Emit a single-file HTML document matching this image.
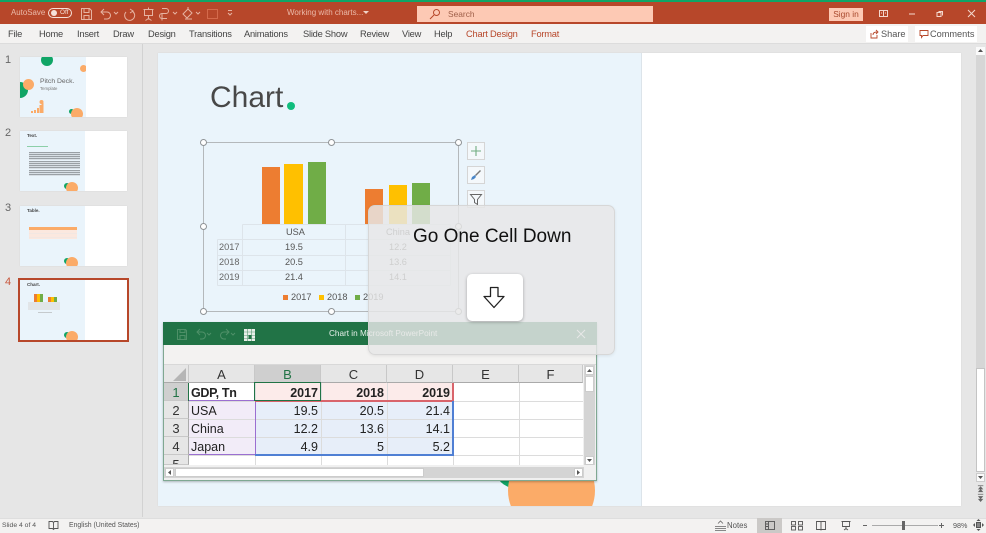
<!DOCTYPE html>
<html style="background:#e6e6e6"><head><meta charset="utf-8"><style>
html,body{margin:0;padding:0}
body{width:986px;height:533px;overflow:hidden;position:relative;background:#e6e6e6;font-family:"Liberation Sans",sans-serif;color:#444;filter:blur(.35px)}
div,span,svg{position:absolute;box-sizing:border-box}
.t{white-space:nowrap;line-height:1}
.tab{top:29px;font-size:9.300px;letter-spacing:-.22px;color:#444;white-space:nowrap;line-height:1.2}
.cell{font-size:12.500px;line-height:20px;height:18px;white-space:nowrap;color:#222;font-family:"Liberation Sans",sans-serif}
.r{text-align:right}
.hd{background:#e6e6e6;border-right:1px solid #c8c8c8;border-bottom:1px solid #aaa;text-align:center;font-size:13px;line-height:19px;color:#333}
.rh{background:#e6e6e6;border-bottom:1px solid #c8c8c8;border-right:1px solid #aaa;text-align:center;font-size:13px;line-height:20px;color:#333;left:164px;width:25px}
.h{width:7px;height:7px;border-radius:50%;background:#fff;border:1px solid #8f9396}
.thumb{left:20px;width:107px;background:#fff;overflow:hidden;box-shadow:0 0 1px #ccc}
.num{left:5px;font-size:11px;line-height:13px;color:#666}
.dot{border-radius:50%}
</style></head><body>

<!-- title bar -->
<div style="left:0;top:0;width:986px;height:2px;background:#10a566"></div>
<div style="left:0;top:2px;width:986px;height:22px;background:#b7472a"></div>
<div class="t" style="left:11px;top:9px;font-size:7.900px;color:#eab9a9">AutoSave</div>
<div style="left:48px;top:8px;width:24px;height:10px;border:1px solid #f6e0d8;border-radius:6px"></div>
<div class="dot" style="left:51px;top:10px;width:6px;height:6px;background:#f6e0d8"></div>
<div class="t" style="left:60px;top:10px;font-size:6.400px;color:#f6e0d8">Off</div>
<svg style="left:0;top:0" width="300" height="24" fill="none" stroke="#e6b3a2" stroke-width="1">
<path d="M81.500 8.500h8l2 2v9h-10zM84 8.500v4h5v-4M84 19.500v-4h5v4"/>
<path d="M104 9l-3 3 3 3M101 12h6a3 3 0 0 1 0 7h-3"/>
<path d="M114 12l2 2 2-2" />
<path d="M130 9l3 2-3 2M132 11a5 5 0 1 1-6 1"/>
<path d="M143.500 9.500h10M144.500 9.500v6h8v-6M148.500 15.500v4M145.500 20.500l3-2 3 2M148.500 7.500v2"/>
<path d="M162 8.500h4a2 2 0 0 1 0 5h-4a2.500 2.500 0 0 0 0 5h5M162 13.500v7"/>
<path d="M173 12l2 2 2-2"/>
<path d="M183 14l5-5 4 4-5 5zM185 19h7M188 9v-2"/>
<path d="M196 12l2 2 2-2"/>
<rect x="207.500" y="9.500" width="10" height="9" stroke="#d46a4c"/>
<path d="M228 10.500h4M228 13l2 2 2-2"/>
</svg>
<div class="t" style="left:287px;top:9px;font-size:8px;color:#eab9a9">Working with charts...</div>
<svg style="left:363px;top:11px" width="6" height="4"><path d="M0 0h6L3 3z" fill="#f0d3c8"/></svg>
<div style="left:417px;top:6px;width:236px;height:16px;background:#fdc9b4"></div>
<svg style="left:429px;top:8px" width="12" height="12" fill="none" stroke="#b7472a" stroke-width="1"><circle cx="7.500" cy="4.500" r="3"/><path d="M5 7l-4 4"/></svg>
<div class="t" style="left:448px;top:10px;font-size:8.400px;color:#a0604a">Search</div>
<div class="t" style="left:829px;top:8px;width:34px;height:13px;background:#fdc9b4;color:#a8482c;font-size:8.400px;line-height:13px;text-align:center">Sign in</div>
<svg style="left:876px;top:6px" width="104" height="16" fill="none" stroke="#f4d8ce" stroke-width="1"><rect x="3.500" y="4.500" width="8" height="6"/><path d="M7.500 5v5M5 7h1M9 7h1"/><path d="M33 8h6"/><path d="M62.500 5.500h4v4M61 6.500h4v4h-4z"/><path d="M92 4l7 7M99 4l-7 7"/></svg>

<!-- ribbon -->
<div style="left:0;top:24px;width:986px;height:20px;background:#f3f2f1;border-bottom:1px solid #dcdcdc"></div>
<div class="tab" style="left:8px">File</div>
<div class="tab" style="left:39px">Home</div>
<div class="tab" style="left:77px">Insert</div>
<div class="tab" style="left:113px">Draw</div>
<div class="tab" style="left:148px">Design</div>
<div class="tab" style="left:189px">Transitions</div>
<div class="tab" style="left:244px">Animations</div>
<div class="tab" style="left:303px">Slide Show</div>
<div class="tab" style="left:360px">Review</div>
<div class="tab" style="left:402px">View</div>
<div class="tab" style="left:434px">Help</div>
<div class="tab" style="left:466px;color:#b7472a">Chart Design</div>
<div class="tab" style="left:531px;color:#b7472a">Format</div>
<div style="left:866px;top:26px;width:42px;height:16px;background:#fff"></div>
<svg style="left:870px;top:29px" width="9" height="10" fill="none" stroke="#b7472a" stroke-width=".9"><path d="M1 4v5h6V6M3 6c0-2 1-3 4-3M6 1l2 2-2 2"/></svg>
<div class="tab" style="left:881px;top:29px;color:#555;letter-spacing:0;font-size:9.200px">Share</div>
<div style="left:915px;top:26px;width:62px;height:16px;background:#fff"></div>
<svg style="left:919px;top:29px" width="10" height="10" fill="none" stroke="#b7472a" stroke-width=".9"><path d="M1 1.500h8v5H4L2.500 8.500v-2H1z"/></svg>
<div class="tab" style="left:930px;top:29px;color:#555;letter-spacing:0;font-size:9.200px">Comments</div>

<!-- thumbnails panel -->
<div style="left:142px;top:44px;width:1px;height:473px;background:#d2d2d2"></div>
<div class="num" style="top:54px">1</div>
<div class="num" style="top:127px">2</div>
<div class="num" style="top:202px">3</div>
<div class="num" style="top:276px;color:#c8573c">4</div>

<div class="thumb" style="top:57px;height:60px">
  <div style="left:0;top:0;width:66px;height:60px;background:#eaf4fb;overflow:hidden">
    <div class="dot" style="left:21px;top:-3px;width:12px;height:12px;background:#10a566"></div>
    <div class="dot" style="left:60px;top:8px;width:7px;height:7px;background:#fbab68"></div>
    <div class="dot" style="left:-8px;top:25px;width:16px;height:16px;background:#10a566"></div>
    <div class="dot" style="left:3px;top:22px;width:11px;height:11px;background:#fbab68"></div>
    <div class="t" style="left:20px;top:22px;font-size:6.800px;color:#666">Pitch Deck.</div>
    <div class="t" style="left:20px;top:30px;font-size:4.300px;color:#777">Template</div>
    <svg style="left:11px;top:43px" width="13" height="14"><path d="M0 13h2v-2H0zM3 13h2V10H3zM6 13h2V8H6zM8.500 13h2V5h-2zM10.500 13h2V3h-2z" fill="#fbab68"/><circle cx="10.500" cy="2" r="2" fill="#fbab68"/></svg>
    <div class="dot" style="left:49px;top:52px;width:5px;height:5px;background:#10a566"></div>
    <div class="dot" style="left:51px;top:51px;width:12px;height:12px;background:#fbab68"></div>
  </div>
</div>
<div class="thumb" style="top:131px;height:60px">
  <div style="left:0;top:0;width:65px;height:60px;background:#eaf4fb"></div>
  <div class="t" style="left:7px;top:3px;font-size:4.500px;font-weight:bold;color:#444">Text.</div>
  <div style="left:7px;top:15px;width:21px;height:1px;background:#8ccfa8"></div>
  <div style="left:9px;top:21px;width:51px;height:8px;background:repeating-linear-gradient(#9aa0a5 0 1px,#d8dfe5 1px 2px)"></div>
  <div style="left:9px;top:30px;width:51px;height:8px;background:repeating-linear-gradient(#9aa0a5 0 1px,#d8dfe5 1px 2px)"></div>
  <div style="left:9px;top:39px;width:51px;height:6px;background:repeating-linear-gradient(#9aa0a5 0 1px,#d8dfe5 1px 2px)"></div>
  <div class="dot" style="left:44px;top:52px;width:6px;height:6px;background:#10a566"></div>
  <div class="dot" style="left:46px;top:51px;width:12px;height:12px;background:#fbab68"></div>
</div>
<div class="thumb" style="top:206px;height:60px">
  <div style="left:0;top:0;width:65px;height:60px;background:#eaf4fb"></div>
  <div class="t" style="left:7px;top:3px;font-size:4.500px;font-weight:bold;color:#444">Table.</div>
  <div style="left:9px;top:21px;width:48px;height:3px;background:#fbab68"></div>
  <div style="left:9px;top:24px;width:48px;height:9px;background:repeating-linear-gradient(#fbe8df 0 3px,#f2e7e2 3px 4px)"></div>
  <div class="dot" style="left:44px;top:52px;width:6px;height:6px;background:#10a566"></div>
  <div class="dot" style="left:46px;top:51px;width:12px;height:12px;background:#fbab68"></div>
</div>
<div style="left:18px;top:278px;width:111px;height:64px;border:2px solid #b7472a;background:#fff;overflow:hidden">
  <div style="left:0;top:0;width:65px;height:60px;background:#eaf4fb"></div>
  <div class="t" style="left:7px;top:3px;font-size:4.500px;font-weight:bold;color:#444">Chart.</div>
  <div style="left:14px;top:14px;width:3px;height:8px;background:#ed7d31"></div>
  <div style="left:17px;top:14px;width:3px;height:8px;background:#ffc000"></div>
  <div style="left:20px;top:14px;width:3px;height:8px;background:#70ad47"></div>
  <div style="left:28px;top:17px;width:3px;height:5px;background:#ed7d31"></div>
  <div style="left:31px;top:17px;width:3px;height:5px;background:#ffc000"></div>
  <div style="left:34px;top:17px;width:3px;height:5px;background:#70ad47"></div>
  <div style="left:8px;top:22px;width:32px;height:8px;background:#e1e5e8"></div>
  <div style="left:18px;top:32px;width:14px;height:1px;background:#c5cacd"></div>
  <div class="dot" style="left:44px;top:52px;width:6px;height:6px;background:#10a566"></div>
  <div class="dot" style="left:46px;top:51px;width:12px;height:12px;background:#fbab68"></div>
</div>

<!-- slide -->
<div style="left:158px;top:53px;width:803px;height:453px;background:#fff;overflow:hidden;box-shadow:0 0 1px #ccc">
  <div style="left:0;top:0;width:484px;height:453px;background:#eaf4fb;border-right:1px solid #dce4ea"></div>
  <div class="dot" style="left:337px;top:395px;width:40px;height:40px;background:#10a566"></div>
  <div class="dot" style="left:350px;top:394px;width:87px;height:87px;background:#fbab68"></div>
</div>
<div class="t" style="left:210px;top:83px;font-size:30px;color:#484848">Chart</div>
<div class="dot" style="left:287px;top:102px;width:8px;height:8px;background:#10bd7d"></div>

<!-- chart -->
<div style="left:203px;top:142px;width:256px;height:170px;border:1px solid #b4b8bb"></div>
<div style="left:262px;top:167px;width:18px;height:57px;background:#ed7d31"></div>
<div style="left:284px;top:164px;width:19px;height:60px;background:#ffc000"></div>
<div style="left:308px;top:162px;width:18px;height:62px;background:#70ad47"></div>
<div style="left:365px;top:189px;width:18px;height:35px;background:#ed7d31"></div>
<div style="left:389px;top:185px;width:18px;height:39px;background:#ffc000"></div>
<div style="left:412px;top:183px;width:18px;height:41px;background:#70ad47"></div>
<svg style="left:210px;top:220px" width="250" height="70" stroke="#dde4ea" fill="none"><path d="M32.500 4.500H240.500M7.500 19.500H240.500M7.500 35.500H240.500M7.500 50.500H240.500M7.500 65.500H240.500M7.500 19.500V65.500M32.500 4.500V65.500M135.500 4.500V65.500M240.500 4.500V65.500"/></svg>
<div class="t" style="left:286px;top:228px;font-size:9.200px;color:#555">USA</div>
<div class="t" style="left:386px;top:228px;font-size:9.200px;color:#555">China</div>
<div class="t" style="left:219px;top:243px;font-size:9.200px;color:#666">2017</div>
<div class="t" style="left:219px;top:258px;font-size:9.200px;color:#666">2018</div>
<div class="t" style="left:219px;top:273px;font-size:9.200px;color:#666">2019</div>
<div class="t" style="left:285px;top:243px;font-size:9.200px;color:#555">19.5</div>
<div class="t" style="left:285px;top:258px;font-size:9.200px;color:#555">20.5</div>
<div class="t" style="left:285px;top:273px;font-size:9.200px;color:#555">21.4</div>
<div class="t" style="left:389px;top:243px;font-size:9.200px;color:#555">12.2</div>
<div class="t" style="left:389px;top:258px;font-size:9.200px;color:#555">13.6</div>
<div class="t" style="left:389px;top:273px;font-size:9.200px;color:#555">14.1</div>
<div style="left:283px;top:295px;width:5px;height:5px;background:#ed7d31"></div>
<div class="t" style="left:291px;top:293px;font-size:9.200px;color:#555">2017</div>
<div style="left:319px;top:295px;width:5px;height:5px;background:#ffc000"></div>
<div class="t" style="left:327px;top:293px;font-size:9.200px;color:#555">2018</div>
<div style="left:355px;top:295px;width:5px;height:5px;background:#70ad47"></div>
<div class="t" style="left:363px;top:293px;font-size:9.200px;color:#555">2019</div>
<div class="h" style="left:200px;top:139px"></div><div class="h" style="left:328px;top:139px"></div><div class="h" style="left:455px;top:139px"></div>
<div class="h" style="left:200px;top:223px"></div><div class="h" style="left:455px;top:223px"></div>
<div class="h" style="left:200px;top:308px"></div><div class="h" style="left:328px;top:308px"></div><div class="h" style="left:455px;top:308px"></div>
<!-- chart side buttons -->
<div style="left:467px;top:142px;width:18px;height:18px;background:#f4f8fb;border:1px solid #d5d5d5"></div>
<svg style="left:467px;top:142px" width="18" height="18"><path d="M9 4v10M4 9h10" stroke="#70ad80" stroke-width="1.100"/></svg>
<div style="left:467px;top:166px;width:18px;height:18px;background:#f4f8fb;border:1px solid #d5d5d5"></div>
<svg style="left:467px;top:166px" width="18" height="18"><path d="M13 4L8 9l1 1 5-5z" fill="#777"/><path d="M8 9l-3 2-1 3 3-1 2-2z" fill="#4a86c8"/></svg>
<div style="left:467px;top:190px;width:18px;height:18px;background:#f4f8fb;border:1px solid #d5d5d5"></div>
<svg style="left:467px;top:190px" width="18" height="18" fill="none" stroke="#666"><path d="M3.500 4.500h11l-4 5v5l-3-2v-3z"/></svg>

<!-- excel -->
<div style="left:163px;top:322px;width:434px;height:159px;background:#f0f0f0;border:1px solid #7fa892;box-shadow:0 1px 2px rgba(0,0,0,.25)"></div>
<div style="left:163px;top:322px;width:434px;height:23px;background:#217346"></div>
<svg style="left:163px;top:322px" width="100" height="23" fill="none" stroke="#4e9068"><path d="M14.500 7.500h8l1 1v9h-9zM17 7.500v3h5v-3M17 17.500v-4h5v4"/><path d="M37 7l-3 3 3 3M34 10h5a3 3 0 0 1 0 7h-2"/><path d="M44 11l2 2 2-2M68 11l2 2 2-2"/><path d="M63 7l3 3-3 3M66 10h-5a3 3 0 0 0 0 7h2"/></svg>
<div style="left:244px;top:329px;width:11px;height:12px;background:#e8efe9"></div>
<svg style="left:244px;top:329px" width="11" height="12"><path d="M0 3h11M0 6.500h11M0 9.500h11M3.500 0v12M7.500 0v12" stroke="#5a9a74" stroke-width=".6"/><rect x="4.500" y="6" width="3" height="4" fill="#217346"/></svg>
<div class="t" style="left:329px;top:330px;font-size:8.200px;color:#e9f2ec">Chart in Microsoft PowerPoint</div>
<svg style="left:576px;top:329px" width="10" height="10"><path d="M1 1l8 8M9 1l-8 8" stroke="#e4eee8"/></svg>
<div style="left:164px;top:345px;width:432px;height:20px;background:#f3f2f1;border-bottom:1px solid #d8d8d8"></div>

<!-- grid -->
<div style="left:164px;top:365px;width:419px;height:100px;background:#fff"></div>
<div class="hd" style="left:164px;top:365px;width:25px;height:18px"></div>
<svg style="left:164px;top:365px" width="25" height="18"><path d="M22 3v13H9z" fill="#b5b5b5"/></svg>
<div class="hd" style="left:189px;top:365px;width:66px;height:18px">A</div>
<div class="hd" style="left:255px;top:365px;width:66px;height:18px;background:#cfcfcf;color:#217346">B</div>
<div class="hd" style="left:321px;top:365px;width:66px;height:18px">C</div>
<div class="hd" style="left:387px;top:365px;width:66px;height:18px">D</div>
<div class="hd" style="left:453px;top:365px;width:66px;height:18px">E</div>
<div class="hd" style="left:519px;top:365px;width:64px;height:18px">F</div>
<div class="rh" style="top:383px;height:18px;background:#cfcfcf;color:#217346">1</div>
<div class="rh" style="top:401px;height:18px">2</div>
<div class="rh" style="top:419px;height:18px">3</div>
<div class="rh" style="top:437px;height:18px">4</div>
<div class="rh" style="top:455px;height:10px;overflow:hidden">5</div>
<!-- tinted -->
<div style="left:189px;top:401px;width:66px;height:54px;background:#f2ecf8"></div>
<div style="left:255px;top:383px;width:198px;height:18px;background:#fcebea"></div>
<div style="left:255px;top:401px;width:198px;height:54px;background:#e7eef9"></div>
<svg style="left:164px;top:365px" width="420" height="100" fill="none" stroke="#dcdcdc"><path d="M25 36.500H419M25 54.500H419M25 72.500H419M25 90.500H419M91.500 18V100M157.500 18V100M223.500 18V100M289.500 18V100M355.500 18V100"/></svg>
<div style="left:189px;top:400px;width:67px;height:55px;border-top:1.500px solid #9b6fd1;border-bottom:1.500px solid #9b6fd1;border-right:1.500px solid #9b6fd1"></div>
<div style="left:255px;top:400px;width:198px;height:1.500px;background:#d9646b"></div>
<div style="left:452px;top:383px;width:1.500px;height:18px;background:#d9646b"></div>
<div style="left:255px;top:454px;width:199px;height:1.500px;background:#4f7fd4"></div>
<div style="left:452px;top:401px;width:1.500px;height:55px;background:#4f7fd4"></div>
<div style="left:188px;top:383px;width:1px;height:18px;background:#217346"></div>
<div style="left:254px;top:382px;width:67px;height:19px;border:1px solid #217346"></div>
<div class="cell" style="left:191px;top:383px;font-weight:bold;letter-spacing:-.3px">GDP, Tn</div>
<div class="cell" style="left:191px;top:401px">USA</div>
<div class="cell" style="left:191px;top:419px">China</div>
<div class="cell" style="left:191px;top:437px">Japan</div>
<div class="cell r" style="left:255px;width:63px;top:383px;font-weight:bold">2017</div>
<div class="cell r" style="left:321px;width:63px;top:383px;font-weight:bold">2018</div>
<div class="cell r" style="left:387px;width:63px;top:383px;font-weight:bold">2019</div>
<div class="cell r" style="left:255px;width:63px;top:401px">19.5</div>
<div class="cell r" style="left:321px;width:63px;top:401px">20.5</div>
<div class="cell r" style="left:387px;width:63px;top:401px">21.4</div>
<div class="cell r" style="left:255px;width:63px;top:419px">12.2</div>
<div class="cell r" style="left:321px;width:63px;top:419px">13.6</div>
<div class="cell r" style="left:387px;width:63px;top:419px">14.1</div>
<div class="cell r" style="left:255px;width:63px;top:437px">4.9</div>
<div class="cell r" style="left:321px;width:63px;top:437px">5</div>
<div class="cell r" style="left:387px;width:63px;top:437px">5.2</div>
<!-- scrollbars -->
<div style="left:584px;top:365px;width:11px;height:100px;background:#d4d4d4"></div>
<div style="left:585px;top:366px;width:9px;height:9px;background:#fff;border:1px solid #ccc"></div>
<svg style="left:587px;top:369px" width="5" height="3"><path d="M0 3h5L2.500 0z" fill="#555"/></svg>
<div style="left:585px;top:376px;width:9px;height:16px;background:#fff;border:1px solid #ccc"></div>
<div style="left:585px;top:456px;width:9px;height:9px;background:#fff;border:1px solid #ccc"></div>
<svg style="left:587px;top:459px" width="5" height="3"><path d="M0 0h5L2.500 3z" fill="#555"/></svg>
<div style="left:164px;top:467px;width:420px;height:11px;background:#d4d4d4"></div>
<div style="left:165px;top:468px;width:9px;height:9px;background:#fff;border:1px solid #ccc"></div>
<svg style="left:168px;top:470px" width="3" height="5"><path d="M3 0v5L0 2.500z" fill="#555"/></svg>
<div style="left:175px;top:468px;width:249px;height:9px;background:#fff;border:1px solid #ccc"></div>
<div style="left:574px;top:468px;width:9px;height:9px;background:#fff;border:1px solid #ccc"></div>
<svg style="left:577px;top:470px" width="3" height="5"><path d="M0 0v5L3 2.500z" fill="#555"/></svg>

<!-- overlay -->
<div style="left:368px;top:205px;width:247px;height:150px;background:rgba(231,231,231,.83);border:1px solid rgba(210,210,210,.8);border-radius:7px;box-shadow:0 1px 3px rgba(0,0,0,.08)"></div>
<div class="t" style="left:413px;top:227px;font-size:19px;color:#111">Go One Cell Down</div>
<div style="left:467px;top:274px;width:56px;height:47px;background:#fff;border-radius:5px;box-shadow:0 1px 3px rgba(0,0,0,.3)"></div>
<svg style="left:482px;top:285px" width="24" height="25" fill="none" stroke="#222" stroke-width="1.300" stroke-linejoin="round"><path d="M8.500 2.500h7.500v9h6L12 22.500 2 11.500h6.500z"/></svg>

<!-- right scrollbar -->
<div style="left:976px;top:47px;width:9px;height:321px;background:#d6d6d6"></div>
<div style="left:976px;top:47px;width:9px;height:8px;background:#fafafa"></div>
<svg style="left:978px;top:49px" width="5" height="3"><path d="M0 3h5L2.500 0z" fill="#555"/></svg>
<div style="left:976px;top:368px;width:9px;height:104px;background:#fff;border:1px solid #c4c4c4"></div>
<div style="left:976px;top:473px;width:9px;height:9px;background:#fafafa;border:1px solid #ccc"></div>
<svg style="left:978px;top:476px" width="5" height="3"><path d="M0 0h5L2.500 3z" fill="#555"/></svg>
<svg style="left:977px;top:484px" width="8" height="20" fill="#666"><path d="M1 1.500h6v.8H1zM4 2.500L7 6H1zM4 5.500L7 9H1zM4 20l-3-3.500h6zM4 17l-3-3.500h6zM1 11h6v.8H1z" transform="scale(.9)"/></svg>

<!-- status bar -->
<div style="left:0;top:518px;width:986px;height:15px;background:#f3f2f1;border-top:1px solid #dedede"></div>
<div class="t" style="left:2px;top:523px;font-size:6.800px;color:#555">Slide 4 of 4</div>
<svg style="left:48px;top:520px" width="11" height="11" fill="none" stroke="#555" stroke-width=".9"><path d="M1 1.500h3.500L5.500 2.500 6.500 1.500H10v7H6.500L5.500 9.500 4.500 8.500H1zM5.500 2.500v7"/></svg>
<div class="t" style="left:69px;top:523px;font-size:6.900px;color:#555">English (United States)</div>
<svg style="left:715px;top:520px" width="15" height="11" fill="none" stroke="#666" stroke-width=".8"><path d="M0 6.500h11M0 8.500h11M0 10.500h11M3 3.500l2.500-2.500 2.500 2.500"/></svg>
<div class="t" style="left:727px;top:522px;font-size:7.800px;color:#555">Notes</div>
<div style="left:757px;top:518px;width:25px;height:15px;background:#cbc9c7"></div>
<svg style="left:757px;top:518px" width="110" height="15" fill="none" stroke="#555" stroke-width=".9"><rect x="8.500" y="3.500" width="9" height="8"/><path d="M11.500 3.500v8M9 6h2M9 8.500h2"/><rect x="34.500" y="3.500" width="4" height="3.500"/><rect x="41.500" y="3.500" width="4" height="3.500"/><rect x="34.500" y="8.500" width="4" height="3.500"/><rect x="41.500" y="8.500" width="4" height="3.500"/><path d="M59.500 3.500h4l.5.500.5-.5h4v8h-4l-.5.500-.5-.5h-4zM64 4v8"/><path d="M84.500 3.500h9M85.500 3.500v5h7v-5M89 8.500v3M87 12l2-1.500 2 1.500"/><path d="M106 7.500h4"/></svg>
<div style="left:872px;top:525px;width:66px;height:1px;background:#aaa"></div>
<div style="left:902px;top:521px;width:3px;height:9px;background:#666"></div>
<svg style="left:938px;top:522px" width="7" height="7"><path d="M3.500 1v5M1 3.500h5" stroke="#666"/></svg>
<div class="t" style="left:953px;top:522px;font-size:7.200px;color:#555">98%</div>
<svg style="left:973px;top:519px" width="11" height="12" fill="none" stroke="#555"><rect x="3.500" y="3.500" width="4" height="5" fill="#888"/><path d="M5.500 0l-2 2h4zM5.500 12l-2-2h4zM0 6l2-2v4zM11 6l-2-2v4z" fill="#555" stroke="none"/></svg>
</body></html>
